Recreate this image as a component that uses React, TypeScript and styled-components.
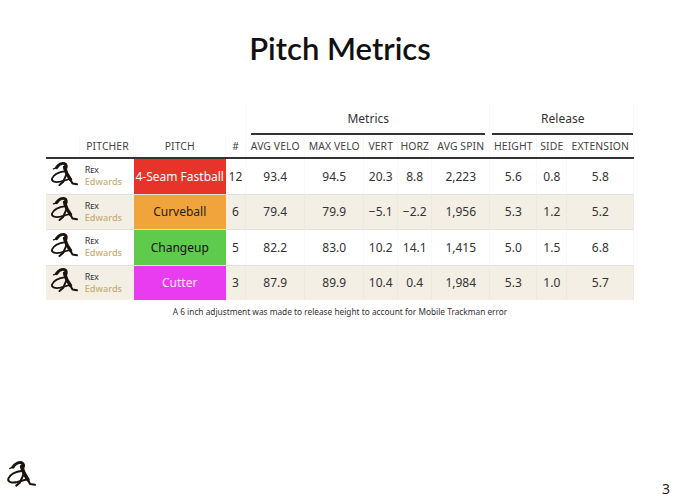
import React from "react";
import styled, { createGlobalStyle } from "styled-components";

const Global = createGlobalStyle`
  html, body { margin: 0; padding: 0; background: #fff; }
  body { font-family: "Noto Sans", "Open Sans", sans-serif; color: #333; }
`;

const Page = styled.div`
  width: 680px;
  height: 502px;
  position: relative;
  display: flex;
  flex-direction: column;
  align-items: center;
  box-sizing: border-box;
  padding-top: 28px;
  overflow: hidden;
`;

const Title = styled.h1`
  margin: 0;
  font-family: "Lato", sans-serif;
  font-weight: 600;
  font-size: 31px;
  line-height: 40px;
  color: #111;
`;

const Table = styled.table`
  margin-top: 37px;
  width: 588px;
  border-collapse: collapse;
  table-layout: fixed;
  font-family: "Noto Sans", "Open Sans", sans-serif;
`;

const SpannerCell = styled.th`
  height: 30px;
  padding: 0;
  font-weight: 400;
  font-size: 12px;
  color: #333;
  vertical-align: bottom;
  border-right: 1px solid #f8f8f8;
`;

const SpannerLabel = styled.div<{ $ml: number; $mr: number }>`
  margin: 0 ${(p) => p.$mr}px 0 ${(p) => p.$ml}px;
  border-bottom: 2px solid #333;
  padding-bottom: 6px;
  line-height: 16px;
`;

const HeadCell = styled.th<{ $left?: boolean }>`
  height: 22px;
  padding: 0 1px 0 ${(p) => (p.$left ? 6 : 1)}px;
  font-weight: 400;
  font-size: 10.4px;
  letter-spacing: 0.1px;
  color: #444;
  text-transform: uppercase;
  text-align: ${(p) => (p.$left ? "left" : "center")};
  white-space: nowrap;
  border-bottom: 2px solid #333;
  border-right: 1px solid #f8f8f8;
`;

const Row = styled.tr<{ $shade: boolean }>`
  background: ${(p) => (p.$shade ? "#f3efe5" : "#fff")};
  border-bottom: 1px solid #e2e0da;
  &:last-child { border-bottom: none; }
`;

const Cell = styled.td`
  height: 34.5px;
  padding: 0 2px;
  font-size: 12px;
  color: #333;
  text-align: center;
  white-space: nowrap;
  border-right: 1px solid rgba(0, 0, 0, 0.025);
`;

const NameCell = styled.td`
  height: 34.5px;
  padding: 0 0 0 5px;
`;

const LogoCell = styled.td`
  padding: 0 0 0 2px;
  height: 34.5px;
`;

const PitchCell = styled.td<{ $bg: string; $fg: string }>`
  padding: 0;
  background: ${(p) => p.$bg};
  color: ${(p) => p.$fg};
  font-size: 12px;
  text-align: center;
  white-space: nowrap;
`;

const NameBlock = styled.div`
  display: flex;
  flex-direction: column;
  gap: 1px;
`;

const First = styled.span`
  font-size: 9px;
  line-height: 10px;
  color: #333;
  font-variant: small-caps;
`;

const Last = styled.span`
  font-size: 9.2px;
  line-height: 11px;
  color: #c7ad76;
  font-weight: 500;
`;

const Footnote = styled.div`
  margin-top: 6px;
  font-size: 8.3px;
  color: #333;
  text-align: center;
`;

const PageNumber = styled.div`
  position: absolute;
  right: 10px;
  bottom: 4px;
  font-size: 14px;
  color: #222;
`;

const CornerLogo = styled.div`
  position: absolute;
  left: 4px;
  bottom: 9px;
`;

const Logo: React.FC<{ size?: number }> = ({ size = 30 }) => (
  <svg width={size} height={size * 0.87} viewBox="0 0 30 26" fill="none">
    {/* head */}
    <path
      d="M8.5 6.5 C10.5 3.5 14 1.8 16.5 2.6 C18.6 3.4 18.8 6 17.2 8.2"
      stroke="#1b140e"
      strokeWidth="3"
      strokeLinecap="round"
    />
    <path d="M9 6.5 L5.5 7.8" stroke="#1b140e" strokeWidth="1.4" strokeLinecap="round" />
    {/* body */}
    <path
      d="M16.5 6 C17.5 10.5 19.5 14.5 22.5 18.5"
      stroke="#1b140e"
      strokeWidth="3.4"
      strokeLinecap="round"
    />
    {/* right foot */}
    <path d="M22 18 L24.5 22.5 L29 23.2" stroke="#1b140e" strokeWidth="2" strokeLinecap="round" strokeLinejoin="round" />
    {/* left leg */}
    <path d="M18.5 13 L15 21 L11.5 24" stroke="#1b140e" strokeWidth="2" strokeLinecap="round" strokeLinejoin="round" />
    {/* swoosh */}
    <path
      d="M17.5 10 C11 10.8 5.5 13.5 4 17.5 C3.2 20.5 7.5 21.8 12.5 20.6 L21 18.2"
      stroke="#1b140e"
      strokeWidth="1.8"
      strokeLinecap="round"
    />
  </svg>
);

type Pitch = {
  name: string;
  bg: string;
  fg: string;
  n: number;
  vals: string[];
};

const pitches: Pitch[] = [
  { name: "4-Seam Fastball", bg: "#e8332b", fg: "#fff", n: 12, vals: ["93.4", "94.5", "20.3", "8.8", "2,223", "5.6", "0.8", "5.8"] },
  { name: "Curveball", bg: "#f1a43b", fg: "#222", n: 6, vals: ["79.4", "79.9", "\u22125.1", "\u22122.2", "1,956", "5.3", "1.2", "5.2"] },
  { name: "Changeup", bg: "#5fcb4d", fg: "#111", n: 5, vals: ["82.2", "83.0", "10.2", "14.1", "1,415", "5.0", "1.5", "6.8"] },
  { name: "Cutter", bg: "#e93cf1", fg: "#fde8fd", n: 3, vals: ["87.9", "89.9", "10.4", "0.4", "1,984", "5.3", "1.0", "5.7"] },
];

const widths = [34, 54, 92, 20, 59, 59, 34, 34, 58, 47, 30, 67];
const headers = ["", "Pitcher", "Pitch", "#", "Avg Velo", "Max Velo", "Vert", "Horz", "Avg Spin", "Height", "Side", "Extension"];

export default function App() {
  return (
    <Page>
      <Global />
      <Title>Pitch Metrics</Title>
      <Table>
        <colgroup>
          {widths.map((w, i) => (
            <col key={i} style={{ width: w }} />
          ))}
        </colgroup>
        <thead>
          <tr>
            <SpannerCell colSpan={4} />
            <SpannerCell colSpan={5}>
              <SpannerLabel $ml={5} $mr={4}>Metrics</SpannerLabel>
            </SpannerCell>
            <SpannerCell colSpan={3}>
              <SpannerLabel $ml={2} $mr={0}>Release</SpannerLabel>
            </SpannerCell>
          </tr>
          <tr>
            {headers.map((h, i) => (
              <HeadCell key={i} $left={i === 1}>
                {h}
              </HeadCell>
            ))}
          </tr>
        </thead>
        <tbody>
          {pitches.map((p, i) => (
            <Row key={p.name} $shade={i % 2 === 1}>
              <LogoCell>
                <Logo size={30} />
              </LogoCell>
              <NameCell>
                <NameBlock>
                  <First>Rex</First>
                  <Last>Edwards</Last>
                </NameBlock>
              </NameCell>
              <PitchCell $bg={p.bg} $fg={p.fg}>{p.name}</PitchCell>
              <Cell>{p.n}</Cell>
              {p.vals.map((v, j) => (
                <Cell key={j}>{v}</Cell>
              ))}
            </Row>
          ))}
        </tbody>
      </Table>
      <Footnote>A 6 inch adjustment was made to release height to account for Mobile Trackman error</Footnote>
      <CornerLogo>
        <Logo size={32} />
      </CornerLogo>
      <PageNumber>3</PageNumber>
    </Page>
  );
}
